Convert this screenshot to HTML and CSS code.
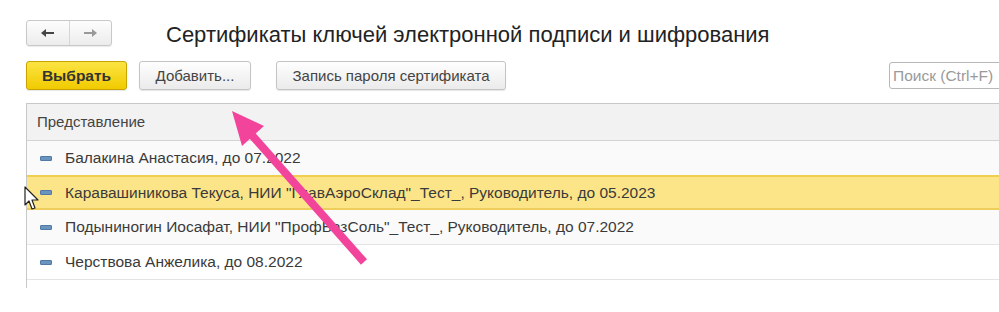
FILE: index.html
```html
<!DOCTYPE html>
<html lang="ru">
<head>
<meta charset="utf-8">
<link rel="stylesheet" href="styles.css">
<title>Сертификаты</title>
</head>
<body>
<div class="page">
  <div class="header">
    <div class="nav">
      <span class="nav-btn">
        <svg width="16" height="10" viewBox="0 0 16 10"><path d="M1 5 L6 1 L6 4 L14 4 L14 6 L6 6 L6 9 Z" fill="#444"/></svg>
      </span>
      <span class="nav-btn">
        <svg width="16" height="10" viewBox="0 0 16 10"><path d="M15 5 L10 1 L10 4 L2 4 L2 6 L10 6 L10 9 Z" fill="#999"/></svg>
      </span>
    </div>
    <h1 class="title">Сертификаты ключей электронной подписи и шифрования</h1>
  </div>
  <div class="toolbar">
    <button class="btn btn-primary">Выбрать</button>
    <button class="btn btn-add">Добавить...</button>
    <button class="btn btn-pass">Запись пароля сертификата</button>
    <div class="search">Поиск (Ctrl+F)</div>
  </div>
  <div class="table">
    <div class="thead">Представление</div>
    <div class="row row-alt"><span class="mark"></span>Балакина Анастасия, до 07.2022</div>
    <div class="row row-sel"><span class="mark"></span>Каравашиникова Текуса, НИИ "ГлавАэроСклад"_Тест_, Руководитель, до 05.2023</div>
    <div class="row row-alt"><span class="mark"></span>Подыниногин Иосафат, НИИ "ПрофБазСоль"_Тест_, Руководитель, до 07.2022</div>
    <div class="row"><span class="mark"></span>Черствова Анжелика, до 08.2022</div>
    <div class="tail"></div>
  </div>
  <svg class="pointer" width="999" height="312" viewBox="0 0 999 312">
    <line x1="364" y1="262" x2="250" y2="133" stroke="#f2449b" stroke-width="8" stroke-linecap="butt"/>
    <path d="M232 111 L264 126 L242 146 Z" fill="#f2449b"/>
  </svg>
  <svg class="cursor" width="18" height="26" viewBox="0 0 18 26">
    <path d="M1 1 L1 19 L5 15 L8 23 L11 22 L8 14 L14 14 Z" fill="#fff" stroke="#222" stroke-width="1.2" stroke-linejoin="round"/>
  </svg>
</div>
</body>
</html>
```
FILE: styles.css
```css
html, body {
  margin: 0;
  padding: 0;
  background: #fff;
  overflow: hidden;
}
.page {
  position: relative;
  width: 999px;
  height: 312px;
  padding: 20px 0 0 26px;
  box-sizing: border-box;
  font-family: "Liberation Sans", Arial, sans-serif;
  color: #333;
}
.header {
  display: flex;
  align-items: center;
  height: 26px;
}
.nav {
  display: flex;
  width: 86px;
  height: 26px;
  box-sizing: border-box;
  border: 1px solid #c8c8c8;
  border-radius: 3px;
  background: linear-gradient(#fdfdfd, #ececec);
  box-shadow: 0 1px 1px rgba(0,0,0,0.08);
}
.nav-btn {
  flex: 1;
  display: flex;
  align-items: center;
  justify-content: center;
}
.nav-btn + .nav-btn {
  border-left: 1px solid #d6d6d6;
}
.title {
  margin: 0 0 0 54px;
  font-size: 22px;
  font-weight: normal;
  color: #222;
  line-height: 26px;
  padding-top: 4px;
  white-space: nowrap;
}
.toolbar {
  display: flex;
  align-items: center;
  margin-top: 15px;
  height: 29px;
}
.btn {
  height: 29px;
  box-sizing: border-box;
  border: 1px solid #c4c4c4;
  border-radius: 3px;
  background: linear-gradient(#fefefe, #ebebeb);
  box-shadow: 0 1px 1px rgba(0,0,0,0.1);
  font-family: "Liberation Sans", Arial, sans-serif;
  font-size: 15px;
  color: #444;
  padding: 0;
  text-align: center;
  white-space: nowrap;
}
.btn-primary {
  width: 101px;
  background: linear-gradient(#fbe443, #f1cb00);
  border-color: #c9a400;
  font-weight: bold;
  font-size: 15.5px;
  color: #333;
}
.btn-add {
  width: 112px;
  margin-left: 12px;
}
.btn-pass {
  width: 230px;
  margin-left: 25px;
}
.search {
  margin-left: auto;
  margin-right: -30px;
  width: 140px;
  height: 27px;
  box-sizing: border-box;
  border: 1px solid #b8b8b8;
  border-radius: 3px;
  font-size: 15.5px;
  color: #9a9a9a;
  line-height: 25px;
  padding-left: 3px;
  white-space: nowrap;
}
.table {
  margin-top: 13px;
  margin-right: -10px;
  border-top: 1px solid #c8c8c8;
  border-left: 1px solid #c8c8c8;
}
.thead {
  height: 36px;
  line-height: 36px;
  background: #f2f2f2;
  border-bottom: 1px solid #d4d4d4;
  padding-left: 10px;
  font-size: 15px;
  color: #444;
}
.row {
  display: flex;
  align-items: center;
  height: 34px;
  border-bottom: 1px solid #e4e4e4;
  padding-left: 13px;
  font-size: 15.5px;
  color: #3a3a3a;
  white-space: nowrap;
}
.row-alt {
  background: #fafafa;
}
.row-sel {
  height: 31px;
  background: #fce589;
  border-top: 2px solid #f0cf4f;
  border-bottom: 2px solid #edce5c;
  margin-top: -1px;
}
.mark {
  display: inline-block;
  width: 10px;
  height: 3px;
  background: #6a93bd;
  border: 1px solid #4f7aa6;
  border-radius: 1px;
  margin-right: 13px;
}
.tail {
  height: 8px;
}
.pointer {
  position: absolute;
  left: 0;
  top: 0;
  pointer-events: none;
}
.cursor {
  position: absolute;
  left: 24px;
  top: 186px;
}
```
